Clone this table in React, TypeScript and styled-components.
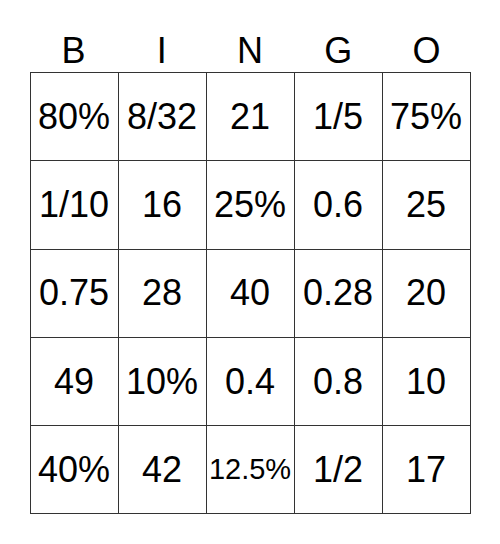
import React, { FC } from 'react'
import styled, { createGlobalStyle } from 'styled-components'

const GlobalStyle = createGlobalStyle`
  html, body {
    margin: 0;
    padding: 0;
    background: #fff;
    font-family: "Liberation Sans", Arial, sans-serif;
    color: #000;
  }
`

const Card = styled.div`
  width: 441px;
  margin: 0 auto;
  padding-top: 30px;
`

const Header = styled.div`
  display: grid;
  grid-template-columns: repeat(5, 1fr);
  height: 42px;
`

const Letter = styled.div`
  text-align: center;
  font-size: 36px;
  line-height: 42px;
`

const Board = styled.div`
  display: grid;
  grid-template-columns: repeat(5, 1fr);
  grid-auto-rows: 88.3px;
  border-top: 1px solid #333;
  border-left: 1px solid #333;
`

const Cell = styled.div<{ $small?: boolean }>`
  display: flex;
  align-items: center;
  justify-content: center;
  border-right: 1px solid #333;
  border-bottom: 1px solid #333;
  font-size: ${p => (p.$small ? '29px' : '36px')};
  white-space: nowrap;
`

const letters = ['B', 'I', 'N', 'G', 'O']

const cells = [
  '80%', '8/32', '21', '1/5', '75%',
  '1/10', '16', '25%', '0.6', '25',
  '0.75', '28', '40', '0.28', '20',
  '49', '10%', '0.4', '0.8', '10',
  '40%', '42', '12.5%', '1/2', '17',
]

const App: FC = () => {
  return (
    <>
      <GlobalStyle />
      <Card>
        <Header>
          {letters.map(l => (
            <Letter key={l}>{l}</Letter>
          ))}
        </Header>
        <Board>
          {cells.map((c, i) => (
            <Cell key={i} $small={c.length > 4}>
              {c}
            </Cell>
          ))}
        </Board>
      </Card>
    </>
  )
}

export default App
